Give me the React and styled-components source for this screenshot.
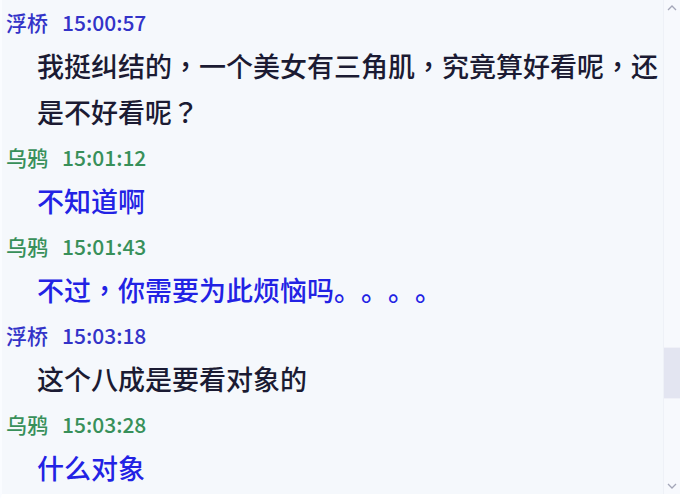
import React from 'react';
import styled, { createGlobalStyle } from 'styled-components';

const GlobalStyle = createGlobalStyle`
  html, body {
    margin: 0;
    padding: 0;
    background: #f5f8fc;
  }
`;

const messages = [
  {
    name: '浮桥', time: '15:00:57', who: 'me',
    lines: ['我挺纠结的，一个美女有三角肌，究竟算好看呢，还', '是不好看呢？'],
  },
  { name: '乌鸦', time: '15:01:12', who: 'other', lines: ['不知道啊'] },
  { name: '乌鸦', time: '15:01:43', who: 'other', lines: ['不过，你需要为此烦恼吗。。。。'] },
  { name: '浮桥', time: '15:03:18', who: 'me', lines: ['这个八成是要看对象的'] },
  { name: '乌鸦', time: '15:03:28', who: 'other', lines: ['什么对象'] },
];

const headColor = { me: '#3333c8', other: '#38905a' };
const textColor = { me: '#1b1b33', other: '#2222e4' };

const Window = styled.div`
  width: 680px;
  height: 499px;
  display: flex;
  background: #f5f8fc;
  border-left: 2px solid #fafcff;
  border-bottom: 5px solid #ffffff;
  box-sizing: border-box;
  overflow: hidden;
  font-family: "Noto Sans CJK SC", "Noto Sans", sans-serif;
  text-spacing-trim: space-all;
`;

const ChatLog = styled.div`
  flex: 1;
  min-width: 0;
  overflow: hidden;
`;

const Header = styled.div`
  height: 43px;
  display: flex;
  align-items: center;
  gap: 14px;
  padding-left: 4px;
  font-size: 21px;
  font-weight: 500;
  color: ${(p) => headColor[p.$who]};
`;

const Body = styled.div`
  padding: 0 0 0 35px;
  font-size: 27px;
  font-weight: 500;
  line-height: 46px;
  color: ${(p) => textColor[p.$who]};
`;

const Line = styled.div`
  white-space: nowrap;
`;

/* centred comma / question mark, as the original chat font draws them */
const Punct = styled.span`
  font-family: "Noto Sans CJK TC", "Noto Sans CJK SC", sans-serif;
`;

const Scrollbar = styled.div`
  width: 16px;
  display: flex;
  flex-direction: column;
  background: #f7f9fd;
  border-left: 1px solid #eef1f7;
`;

const Arrow = styled.div`
  height: 16px;
  display: flex;
  align-items: center;
  justify-content: center;
`;

const Track = styled.div`
  flex: 1;
  display: flex;
  flex-direction: column;
  padding-top: 331px;
`;

const Thumb = styled.div`
  height: 50px;
  background: #e3e5f1;
  border-top: 1px solid #f0f1f8;
  border-bottom: 1px solid #f0f1f8;
`;

const Chevron = ({ down }) => (
  <svg width="10" height="8" viewBox="0 0 10 8">
    <path
      d={down ? 'M1 2 L5 6 L9 2' : 'M1 6 L5 2 L9 6'}
      fill="none"
      stroke="#a4a6b8"
      strokeWidth="1.3"
    />
  </svg>
);

const renderText = (text) =>
  text.split(/([，？])/).map((part, i) =>
    /^[，？]$/.test(part) ? <Punct key={i}>{part}</Punct> : part
  );

export default function App() {
  return (
    <>
      <GlobalStyle />
      <Window>
        <ChatLog>
          {messages.map((m, i) => (
            <div key={i}>
              <Header $who={m.who}>
                <span>{m.name}</span>
                <span>{m.time}</span>
              </Header>
              <Body $who={m.who}>
                {m.lines.map((line, j) => (
                  <Line key={j}>{renderText(line)}</Line>
                ))}
              </Body>
            </div>
          ))}
        </ChatLog>
        <Scrollbar>
          <Arrow><Chevron /></Arrow>
          <Track><Thumb /></Track>
          <Arrow><Chevron down /></Arrow>
        </Scrollbar>
      </Window>
    </>
  );
}
